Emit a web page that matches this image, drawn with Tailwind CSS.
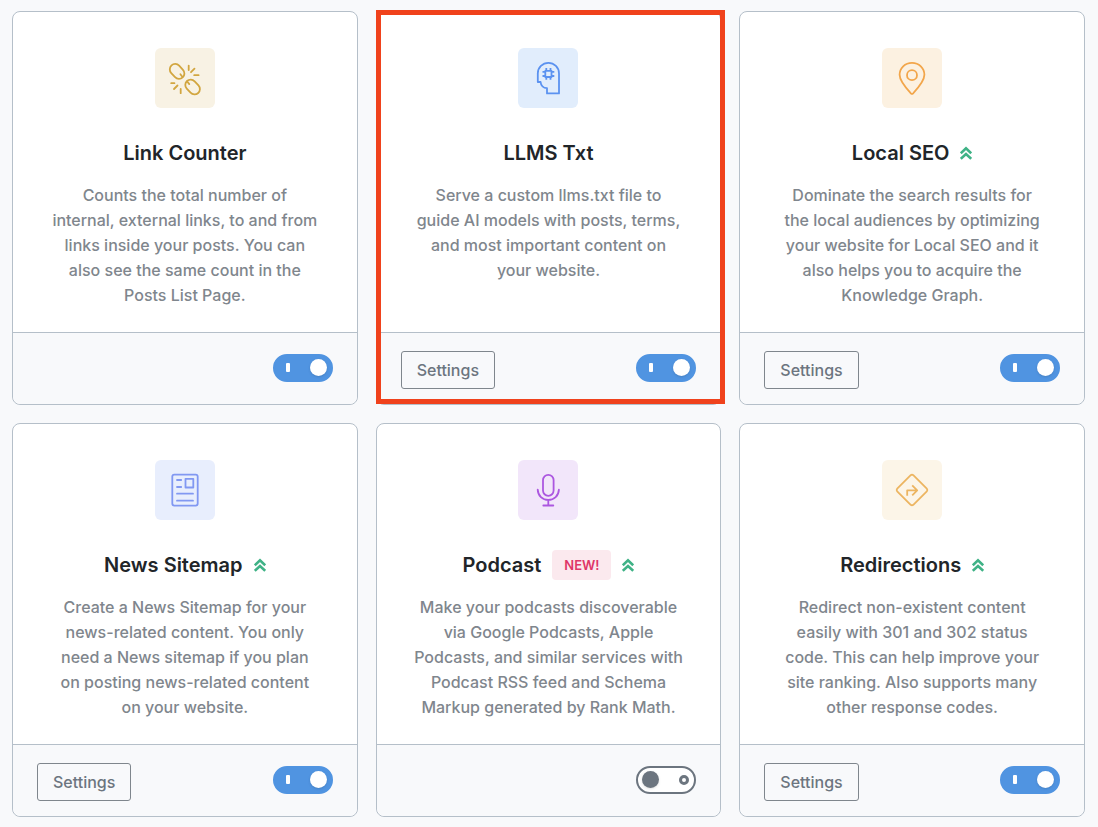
<!DOCTYPE html>
<html lang="en">
<head>
  <meta charset="UTF-8">
  <meta name="viewport" content="width=device-width, initial-scale=1.0">
  <title>Modules</title>
  <script src="https://cdn.jsdelivr.net/npm/@tailwindcss/browser@4"></script>
</head>
<body class="bg-[#f8f9fb] font-['Inter','Liberation_Sans',sans-serif] text-[#7f868d]">
  <main class="grid grid-cols-3 gap-[18px] pt-[11px] pr-[13px] pb-[10px] pl-3">

    <!-- Link Counter -->
    <section class="flex flex-col rounded-lg border border-[#b5bfc9] bg-white">
      <div class="flex grow flex-col items-center px-8 pt-9 pb-6 text-center">
        <svg class="size-[60px] rounded-md bg-[#f8f2e4] text-[#d2a640]" viewBox="0 0 60 60" fill="none" stroke="currentColor" stroke-width="1.8" stroke-linecap="round" stroke-linejoin="round" aria-hidden="true">
          <rect x="13.9" y="18" width="16.4" height="10.8" rx="5.4" transform="rotate(47 22.1 23.400)"/>
          <rect x="29.400" y="33.600" width="16.400" height="10.800" rx="5.400" transform="rotate(47 37.600 39)"/>
          <path d="m25.400 26.300 1.900 2.400M34.300 36.100l-1.900-2.400"/>
          <path d="M33.700 17.600v4.400M39.500 20.600l-3.500 3.600M39.200 27.200h4.400M16.200 35.200h3.200M22.500 37.500l-3.500 3.500M25.700 41v4.200"/>
        </svg>
        <h2 class="mt-[30px] flex h-[30px] items-center gap-[11px] text-xl font-semibold text-[#212529]">Link Counter</h2>
        <p class="mt-[15px] text-base leading-[25px] font-medium">Counts the total number of<br>internal, external links, to and from<br>links inside your posts. You can<br>also see the same count in the<br>Posts List Page.</p>
      </div>
      <div class="flex h-[72px] items-start justify-end rounded-b-lg border-t border-[#b5bfc9] bg-[#f8f9fb] px-6 pt-[18px]">
        <label class="relative mt-[3px] block h-7 w-[60px]">
          <input type="checkbox" checked aria-label="Link Counter" class="peer block size-full appearance-none rounded-full border-2 border-[#6c757f] bg-white checked:border-[#5094e1] checked:bg-[#5094e1]">
          <span class="absolute top-[9px] left-[13px] hidden h-[9px] w-1 rounded-[1px] bg-white peer-checked:block"></span>
          <span class="absolute top-[5px] left-[6px] size-[17px] rounded-full bg-[#6c757f] shadow-sm peer-checked:left-[37px] peer-checked:bg-white"></span>
        </label>
      </div>
    </section>

    <!-- LLMS Txt -->
    <section class="relative flex flex-col rounded-lg border border-[#b5bfc9] bg-white">
      <div class="flex grow flex-col items-center px-8 pt-9 pb-6 text-center">
        <svg class="size-[60px] rounded-md bg-[#e1edfc] text-[#5b92f0]" viewBox="0 0 60 60" fill="none" stroke="currentColor" stroke-width="1.8" stroke-linejoin="round" aria-hidden="true">
          <path d="M19.8 25.4a10.6 10.6 0 0 1 21.2 0v20H29v-5.2c-3.6-.2-6.2-2.8-6.4-6.2h-2.8z"/>
          <path d="M27.300 22.800h6.200V29h-6.200zM28.300 20v2.800M32.500 20v2.800M28.300 29v2.800M32.500 29v2.800M24.500 23.800h2.800M24.500 28h2.800M33.500 23.800h2.800M33.500 28h2.800"/>
        </svg>
        <h2 class="mt-[30px] flex h-[30px] items-center gap-[11px] text-xl font-semibold text-[#212529]">LLMS Txt</h2>
        <p class="mt-[15px] text-base leading-[25px] font-medium">Serve a custom llms.txt file to<br>guide AI models with posts, terms,<br>and most important content on<br>your website.</p>
      </div>
      <div class="flex h-[72px] items-start justify-between rounded-b-lg border-t border-[#b5bfc9] bg-[#f8f9fb] px-6 pt-[18px]">
        <button type="button" class="h-[38px] rounded-[3px] border border-[#7f868d] px-[15px] text-base font-medium text-[#6c757f]">Settings</button>
        <label class="relative mt-[3px] block h-7 w-[60px]">
          <input type="checkbox" checked aria-label="LLMS Txt" class="peer block size-full appearance-none rounded-full border-2 border-[#6c757f] bg-white checked:border-[#5094e1] checked:bg-[#5094e1]">
          <span class="absolute top-[9px] left-[13px] hidden h-[9px] w-1 rounded-[1px] bg-white peer-checked:block"></span>
          <span class="absolute top-[5px] left-[6px] size-[17px] rounded-full bg-[#6c757f] shadow-sm peer-checked:left-[37px] peer-checked:bg-white"></span>
        </label>
      </div>
      <!-- highlight frame -->
      <div class="pointer-events-none absolute -top-[2px] -right-[5px] bottom-0 -left-px border-5 border-[#f0421c]"></div>
    </section>

    <!-- Local SEO -->
    <section class="flex flex-col rounded-lg border border-[#b5bfc9] bg-white">
      <div class="flex grow flex-col items-center px-8 pt-9 pb-6 text-center">
        <svg class="size-[60px] rounded-md bg-[#fcf1e1] text-[#f2a64b]" viewBox="0 0 60 60" fill="none" stroke="currentColor" stroke-width="1.8" stroke-linejoin="round" aria-hidden="true">
          <path d="M30 14.8c-7 0-12.4 5.3-12.4 12 0 6.5 6.5 13.4 11.3 18.5q1.1 1.1 2.2 0c4.8-5.1 11.3-12 11.3-18.5 0-6.7-5.400-12-12.400-12z"/>
          <circle cx="30" cy="27.200" r="5"/>
        </svg>
        <h2 class="mt-[30px] flex h-[30px] items-center gap-[11px] text-xl font-semibold text-[#212529]">Local SEO
          <svg class="h-[14px] w-3" viewBox="0 0 12 14" fill="none" stroke="#3fb286" stroke-width="2.6" aria-hidden="true"><path d="M.8 7.300 6 2.400l5.200 4.900M.8 12.900 6 8l5.200 4.900"/></svg>
        </h2>
        <p class="mt-[15px] text-base leading-[25px] font-medium">Dominate the search results for<br>the local audiences by optimizing<br>your website for Local SEO and it<br>also helps you to acquire the<br>Knowledge Graph.</p>
      </div>
      <div class="flex h-[72px] items-start justify-between rounded-b-lg border-t border-[#b5bfc9] bg-[#f8f9fb] px-6 pt-[18px]">
        <button type="button" class="h-[38px] rounded-[3px] border border-[#7f868d] px-[15px] text-base font-medium text-[#6c757f]">Settings</button>
        <label class="relative mt-[3px] block h-7 w-[60px]">
          <input type="checkbox" checked aria-label="Local SEO" class="peer block size-full appearance-none rounded-full border-2 border-[#6c757f] bg-white checked:border-[#5094e1] checked:bg-[#5094e1]">
          <span class="absolute top-[9px] left-[13px] hidden h-[9px] w-1 rounded-[1px] bg-white peer-checked:block"></span>
          <span class="absolute top-[5px] left-[6px] size-[17px] rounded-full bg-[#6c757f] shadow-sm peer-checked:left-[37px] peer-checked:bg-white"></span>
        </label>
      </div>
    </section>

    <!-- News Sitemap -->
    <section class="flex flex-col rounded-lg border border-[#b5bfc9] bg-white">
      <div class="flex grow flex-col items-center px-8 pt-9 pb-6 text-center">
        <svg class="size-[60px] rounded-md bg-[#e8eefd] text-[#8198f2]" viewBox="0 0 60 60" fill="none" stroke="currentColor" stroke-width="1.8" stroke-linecap="round" stroke-linejoin="round" aria-hidden="true">
          <rect x="17.3" y="14.6" width="25.4" height="31" rx="2"/>
          <rect x="30.5" y="18.8" width="7.8" height="8.7"/>
          <path d="M22 20h4.200M22 27h4.200M22 33.700h16M22 40.700h16"/>
        </svg>
        <h2 class="mt-[30px] flex h-[30px] items-center gap-[11px] text-xl font-semibold text-[#212529]">News Sitemap
          <svg class="h-[14px] w-3" viewBox="0 0 12 14" fill="none" stroke="#3fb286" stroke-width="2.6" aria-hidden="true"><path d="M.8 7.300 6 2.400l5.200 4.900M.8 12.900 6 8l5.200 4.900"/></svg>
        </h2>
        <p class="mt-[15px] text-base leading-[25px] font-medium">Create a News Sitemap for your<br>news-related content. You only<br>need a News sitemap if you plan<br>on posting news-related content<br>on your website.</p>
      </div>
      <div class="flex h-[72px] items-start justify-between rounded-b-lg border-t border-[#b5bfc9] bg-[#f8f9fb] px-6 pt-[18px]">
        <button type="button" class="h-[38px] rounded-[3px] border border-[#7f868d] px-[15px] text-base font-medium text-[#6c757f]">Settings</button>
        <label class="relative mt-[3px] block h-7 w-[60px]">
          <input type="checkbox" checked aria-label="News Sitemap" class="peer block size-full appearance-none rounded-full border-2 border-[#6c757f] bg-white checked:border-[#5094e1] checked:bg-[#5094e1]">
          <span class="absolute top-[9px] left-[13px] hidden h-[9px] w-1 rounded-[1px] bg-white peer-checked:block"></span>
          <span class="absolute top-[5px] left-[6px] size-[17px] rounded-full bg-[#6c757f] shadow-sm peer-checked:left-[37px] peer-checked:bg-white"></span>
        </label>
      </div>
    </section>

    <!-- Podcast -->
    <section class="flex flex-col rounded-lg border border-[#b5bfc9] bg-white">
      <div class="flex grow flex-col items-center px-8 pt-9 pb-6 text-center">
        <svg class="size-[60px] rounded-md bg-[#f2e6fa] text-[#ac57e0]" viewBox="0 0 60 60" fill="none" stroke="currentColor" stroke-width="1.8" stroke-linecap="round" aria-hidden="true">
          <rect x="25" y="14.8" width="10.6" height="21" rx="5.3"/>
          <path d="M19.700 29.600c.3 6.200 4.800 10.300 10.600 10.300s10.300-4.100 10.600-10.300M30.300 40v5.500M25.300 45.500h10"/>
        </svg>
        <h2 class="mt-[30px] flex h-[30px] items-center gap-[11px] text-xl font-semibold text-[#212529]">Podcast
          <span class="flex h-[30px] items-center rounded-sm bg-[#fbe9ee] px-3 text-[13px] text-[#df3668]">NEW!</span>
          <svg class="h-[14px] w-3" viewBox="0 0 12 14" fill="none" stroke="#3fb286" stroke-width="2.6" aria-hidden="true"><path d="M.8 7.300 6 2.400l5.200 4.900M.8 12.900 6 8l5.200 4.900"/></svg>
        </h2>
        <p class="mt-[15px] text-base leading-[25px] font-medium">Make your podcasts discoverable<br>via Google Podcasts, Apple<br>Podcasts, and similar services with<br>Podcast RSS feed and Schema<br>Markup generated by Rank Math.</p>
      </div>
      <div class="flex h-[72px] items-start justify-end rounded-b-lg border-t border-[#b5bfc9] bg-[#f8f9fb] px-6 pt-[18px]">
        <label class="relative mt-[3px] block h-7 w-[60px]">
          <input type="checkbox" aria-label="Podcast" class="peer block size-full appearance-none rounded-full border-2 border-[#6c757f] bg-white checked:border-[#5094e1] checked:bg-[#5094e1]">
          <span class="absolute top-[9px] right-[7px] size-[10px] rounded-full border-3 border-[#6c757f] peer-checked:hidden"></span>
          <span class="absolute top-[5px] left-[6px] size-[17px] rounded-full bg-[#6c757f] shadow-sm peer-checked:left-[37px] peer-checked:bg-white"></span>
        </label>
      </div>
    </section>

    <!-- Redirections -->
    <section class="flex flex-col rounded-lg border border-[#b5bfc9] bg-white">
      <div class="flex grow flex-col items-center px-8 pt-9 pb-6 text-center">
        <svg class="size-[60px] rounded-md bg-[#fcf5e8] text-[#ecb561]" viewBox="0 0 60 60" fill="none" stroke="currentColor" stroke-width="1.8" stroke-linejoin="round" aria-hidden="true">
          <path d="M28.700 15.200q1.300-1.100 2.600 0l13.500 13.500q1.100 1.300 0 2.600L31.300 44.800q-1.300 1.100-2.600 0L15.200 31.300q-1.100-1.300 0-2.600z"/>
          <path d="M25.200 35.800v-5.500h9.300M30.200 25.300l5 5-5 5"/>
        </svg>
        <h2 class="mt-[30px] flex h-[30px] items-center gap-[11px] text-xl font-semibold text-[#212529]">Redirections
          <svg class="h-[14px] w-3" viewBox="0 0 12 14" fill="none" stroke="#3fb286" stroke-width="2.6" aria-hidden="true"><path d="M.8 7.300 6 2.400l5.200 4.900M.8 12.900 6 8l5.200 4.900"/></svg>
        </h2>
        <p class="mt-[15px] text-base leading-[25px] font-medium">Redirect non-existent content<br>easily with 301 and 302 status<br>code. This can help improve your<br>site ranking. Also supports many<br>other response codes.</p>
      </div>
      <div class="flex h-[72px] items-start justify-between rounded-b-lg border-t border-[#b5bfc9] bg-[#f8f9fb] px-6 pt-[18px]">
        <button type="button" class="h-[38px] rounded-[3px] border border-[#7f868d] px-[15px] text-base font-medium text-[#6c757f]">Settings</button>
        <label class="relative mt-[3px] block h-7 w-[60px]">
          <input type="checkbox" checked aria-label="Redirections" class="peer block size-full appearance-none rounded-full border-2 border-[#6c757f] bg-white checked:border-[#5094e1] checked:bg-[#5094e1]">
          <span class="absolute top-[9px] left-[13px] hidden h-[9px] w-1 rounded-[1px] bg-white peer-checked:block"></span>
          <span class="absolute top-[5px] left-[6px] size-[17px] rounded-full bg-[#6c757f] shadow-sm peer-checked:left-[37px] peer-checked:bg-white"></span>
        </label>
      </div>
    </section>

  </main>
</body>
</html>
